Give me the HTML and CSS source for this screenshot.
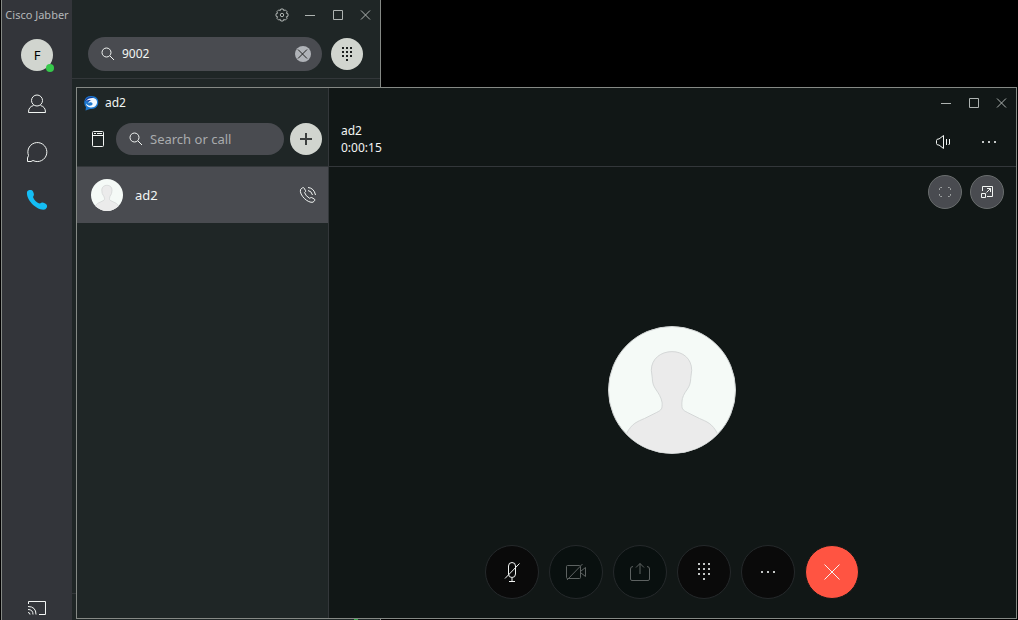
FILE: index.html
```html
<!DOCTYPE html>
<html lang="en">
<head>
<meta charset="utf-8">
<title>Cisco Jabber</title>
<link rel="stylesheet" href="styles.css">
</head>
<body>
<svg class="defs" aria-hidden="true">
  <symbol id="search" viewBox="0 0 14 14"><circle cx="5.5" cy="5.5" r="4.5"/><path d="M9 9l4 4"/></symbol>
  <symbol id="min" viewBox="0 0 12 12"><path d="M1 6.500h10"/></symbol>
  <symbol id="max" viewBox="0 0 12 12"><path d="M1.500 1.500h9v9h-9z"/></symbol>
  <symbol id="close" viewBox="0 0 12 12"><path d="M1 1.500l9 9M10 1.500l-9 9"/></symbol>
  <symbol id="person" viewBox="0 0 128 128">
    <path d="M18 108C23 98 29 96 36 93L48 87C54 84 54 83 54 77C53 71 50 67 48 64C45 60 44 56 44 52L43 44C43 32 53 25 64 25S84 32 84 44L83 52C83 56 82 60 79 64C77 67 74 71 74 77C74 83 74 84 80 87L92 93C99 96 105 98 110 108V130H18z"/>
  </symbol>
  <symbol id="dots" viewBox="0 0 16 4"><path d="M1 1h2v2H1zM7 1h2v2H7zM13 1h2v2h-2z"/></symbol>
</svg>

<main class="desktop">
  <section class="window hub" aria-label="Cisco Jabber">
    <nav class="rail">
      <h1 class="app-name">Cisco Jabber</h1>
      <button class="me" aria-label="My profile">F<span class="presence"></span></button>
      <button class="tab" aria-label="Contacts"><svg class="line" width="20" height="20" viewBox="0 0 20 20"><circle cx="10" cy="6.500" r="5.500"/><path d="M6.500 11.500C3 12.500 1.500 14.500 1.500 18.500h17c0-4-1.500-6-5-7"/></svg></button>
      <button class="tab" aria-label="Chats"><svg class="line" width="22" height="22" viewBox="0 0 22 22"><path d="M1.500 20.500V17L2.500 14.500A9.500 9.500 0 1 1 7 19.500L5 20.500z"/></svg></button>
      <button class="tab" aria-label="Calls"><svg class="handset" width="22" height="22" viewBox="0 0 22 22"><path d="M1 3C2 .5 6 .5 7 2.500C8 4.500 8.500 6 7 8C8 11 11 14 14 14.500C16 13 18 13.500 20 15C22 17 21 19 19 20.500C11 22 0 11 1 3z"/></svg></button>
      <button class="tab cast" aria-label="Share screen"><svg class="line" width="20" height="16" viewBox="0 0 20 16"><path d="M1.500 4V1.500h17v13H12M1 6.500q8 0 8 8M1 9.500q5 0 5 5M1 12.500q2 0 2 2"/></svg></button>
    </nav>
    <div class="hub-body">
      <div class="controls hub-controls">
        <button aria-label="Settings"><svg class="line" width="14" height="14" viewBox="0 0 14 14"><path d="M5.800 1h2.400l.5 1.600 1.600-.7 1.800 1.800-.7 1.600 1.600.5v2.400l-1.600.5.7 1.600-1.800 1.800-1.600-.7-.5 1.600H5.800l-.5-1.600-1.600.7-1.800-1.800.7-1.600L1 8.200V5.800l1.600-.5-.7-1.600 1.800-1.800 1.600.7z"/><circle cx="7" cy="7" r="1.700"/></svg></button>
        <button aria-label="Minimize"><svg class="line" width="12" height="12"><use href="#min"/></svg></button>
        <button aria-label="Maximize"><svg class="line" width="12" height="12"><use href="#max"/></svg></button>
        <button aria-label="Close"><svg class="line" width="12" height="12"><use href="#close"/></svg></button>
      </div>
      <div class="search-row">
        <label class="search"><svg class="line" width="14" height="14"><use href="#search"/></svg><input type="text" value="9002" aria-label="Search or call">
          <button class="clear" aria-label="Clear"><svg class="line" width="12" height="12"><use href="#close"/></svg></button></label>
        <button class="round" aria-label="Keypad"><svg width="10" height="14" viewBox="0 0 10 14"><path d="M0 0h2v2H0zM4 0h2v2H4zM8 0h2v2H8zM0 4h2v2H0zM4 4h2v2H4zM8 4h2v2H8zM0 8h2v2H0zM4 8h2v2H4zM8 8h2v2H8zM4 12h2v2H4z"/></svg></button>
      </div>
      <div class="hub-list"></div>
      <footer class="hub-foot"><span class="line-status"></span></footer>
    </div>
  </section>

  <section class="window call" aria-label="Call with ad2">
    <aside class="list">
      <header class="list-head">
        <div class="title"><svg width="16" height="16" viewBox="0 0 16 16"><path fill="#1d78cf" d="M3 12C0 9 .5 1 8 1c7 0 8 5 7 8.500C14 13 10 14.500 7 14L2.500 15.500z"/><path fill="#143a9a" d="M2 6C3 3 6 1.500 9 2L11 3.500L6 6.500z"/><path fill="#f2f8ff" d="M3 6C5 3 11 1.500 13.500 5C15.500 9 12 13 7.500 12.500C4.500 12 3 10.500 3 8.500C4 10 6 11 8 10.500C10 10 10 8 8.500 7.500C6.500 7 6 8 5.500 8.500C5 7 6.500 5.500 8.500 5.500C6.500 4.500 5 5 3 6z"/></svg><h2>ad2</h2></div>
        <div class="list-search">
          <button class="dock" aria-label="Dock window"><svg class="line" width="14" height="18" viewBox="0 0 14 18"><rect x="1.500" y="1.500" width="11" height="15" rx="1"/><path d="M1.500 5.500h11M3 3.500h2m1 0h5"/></svg></button>
          <label class="search"><svg class="line" width="14" height="14"><use href="#search"/></svg><input type="text" placeholder="Search or call" aria-label="Search or call"></label>
          <button class="round" aria-label="New conversation"><svg class="line plus" width="12" height="12" viewBox="0 0 12 12"><path d="M6 0v12M0 6h12"/></svg></button>
        </div>
      </header>
      <button class="contact">
        <svg class="avatar" width="32" height="32"><use href="#person"/></svg>
        <span>ad2</span>
        <svg class="line ringing" width="18" height="18" viewBox="0 0 18 18"><path d="M1.500 3.500L3.500 1.800Q4.500 1.200 5.200 2.200L6.600 4.800Q6.900 5.700 5.600 6.600Q6.500 10 10.800 12.400Q11.900 11.100 12.800 11.600L15.500 13.200Q16.400 14 15.600 14.700L14 16.200C9 17.500 0 9 1.500 3.500zM9 1.500Q15 2 16.500 9M9 4.500Q12.500 5 13.500 9"/></svg>
      </button>
    </aside>
    <div class="stage">
      <header class="stage-head">
        <div class="who"><h2>ad2</h2><time>0:00:15</time></div>
        <div class="head-actions">
          <div class="controls">
            <button aria-label="Minimize"><svg class="line" width="12" height="12"><use href="#min"/></svg></button>
            <button aria-label="Maximize"><svg class="line" width="12" height="12"><use href="#max"/></svg></button>
            <button aria-label="Close"><svg class="line" width="12" height="12"><use href="#close"/></svg></button>
          </div>
          <div class="audio">
            <button aria-label="Volume"><svg class="line" width="16" height="16" viewBox="0 0 16 16"><path d="M8.500 1.500v13L4 11H2.500L1.500 9.500v-3L2.500 5H4zM11.500 5v6M14.500 5v5l-1 1"/></svg></button>
            <button aria-label="More"><svg class="soft" width="16" height="4"><use href="#dots"/></svg></button>
          </div>
        </div>
      </header>
      <div class="video">
        <div class="view-buttons">
          <button class="view dim" aria-label="Full screen"><svg class="line" width="14" height="12" viewBox="0 0 14 12"><path d="M1.500 4V2.500l1-1H4M10 1.500h1.500l1 1V4M12.500 8v1.500l-1 1H10M4 10.500H2.500l-1-1V8"/></svg></button>
          <button class="view" aria-label="Pop out"><svg class="line" width="14" height="14" viewBox="0 0 14 14"><path d="M2.500 6V1.500h10v10H7M1.500 8.500h4v4h-4zM6.500 7.500l4-4M7 3.500h3.500V7"/></svg></button>
        </div>
        <svg class="avatar large" width="128" height="128"><use href="#person"/></svg>
        <div class="call-bar">
          <button class="act" aria-label="Mute"><svg class="line" width="18" height="24" viewBox="0 0 18 24"><rect x="5.500" y="2.500" width="7" height="15" rx="3.500"/><path d="M16.500 3.500L2 18.500M9 18v3.500M6 21.500h6"/></svg></button>
          <button class="act" disabled aria-label="Start video"><svg class="line" width="22" height="18" viewBox="0 0 22 18"><rect x="1.500" y="2.500" width="14" height="13" rx="1"/><path d="M16 8l4.500-3.500v9L16 10M17.500 1L2 17"/></svg></button>
          <button class="act" disabled aria-label="Share"><svg class="line" width="22" height="20" viewBox="0 0 22 20"><path d="M4 4.500Q1.500 4.500 1.500 7v10q0 1.500 1.500 1.500h16q1.500 0 1.500-1.500V7q0-2.500-2.500-2.500M11 12V1.500M7 5.500l4-4 4 4"/></svg></button>
          <button class="act" aria-label="Keypad"><svg class="soft" width="12" height="18" viewBox="0 0 12 18"><path d="M0 0h2v2H0zM5 0h2v2H5zM10 0h2v2h-2zM0 5h2v2H0zM5 5h2v2H5zM10 5h2v2h-2zM0 10h2v2H0zM5 10h2v2H5zM10 10h2v2h-2zM5 15h2v2H5z"/></svg></button>
          <button class="act" aria-label="More options"><svg class="soft" width="16" height="4"><use href="#dots"/></svg></button>
          <button class="act end" aria-label="End call"><svg class="line" width="18" height="18" viewBox="0 0 18 18"><path d="M1.500 1.500l15 15M16.500 1.500l-15 15"/></svg></button>
        </div>
      </div>
    </div>
  </section>
</main>
</body>
</html>
```
FILE: styles.css
```css
* { box-sizing: border-box; }

body {
  margin: 0;
  background: #000;
  color: #f2f5f3;
  font: 12px/16px "Noto Sans", "Open Sans", sans-serif;
}

button, input { font: inherit; color: inherit; border: 0; padding: 0; background: none; }
button { display: grid; place-items: center; flex: none; }
h1, h2 { margin: 0; font-size: inherit; font-weight: 400; }
svg { display: block; flex: none; fill: currentColor; }
.defs { position: absolute; width: 0; height: 0; }
.line { fill: none; stroke: currentColor; }
.plus { stroke: #3c403f; stroke-width: 2; }
.soft { color: #c4c7c6; }

.desktop { position: relative; height: 100vh; overflow: hidden; }
.window { position: absolute; display: flex; border: 1px solid #858985; }

/* Hub window */
.hub { left: 1px; top: 0; bottom: 0; width: 380px; border-width: 0 1px; background: #1f2626; }
.rail { width: 70px; display: flex; flex-direction: column; align-items: center; background: #33353a; }
.app-name { height: 31px; font-size: 11px; line-height: 30px; color: #b4b7b9; white-space: nowrap; }
.me { position: relative; width: 32px; height: 32px; margin: 8px 0 9px; border-radius: 50%; background: #d1d5cf; color: #000; font-size: 13px; }
.presence { position: absolute; right: -1px; bottom: -1px; width: 8px; height: 8px; border-radius: 50%; background: #36c94b; }
.tab { width: 70px; height: 48px; }
.handset { color: #14bdf4; }
.cast { height: 24px; margin-top: auto; }
.hub-body { flex: 1; display: flex; flex-direction: column; }
.controls { display: flex; color: #aeb3b1; }
.controls button { width: 28px; height: 30px; }
.hub-controls { justify-content: flex-end; }
.search-row { display: flex; align-items: center; gap: 9px; padding: 7px 17px 7px 16px; border-bottom: 1px solid #33373a; }
.search { flex: 1; min-width: 0; height: 34px; display: flex; align-items: center; gap: 7px; padding: 0 11px 0 13px; border-radius: 17px; background: #494b50; }
.search input { flex: 1; min-width: 0; width: 0; outline: 0; }
.search input::placeholder { color: #a9acae; opacity: 1; }
.clear { width: 16px; height: 16px; border-radius: 50%; background: #b0b3b8; color: #222; }
.round { width: 32px; height: 32px; border-radius: 50%; background: #d1d5cf; color: #1b1f1e; }
.hub-list { flex: 1; }
.hub-foot { height: 27px; display: flex; align-items: flex-end; justify-content: flex-end; padding-right: 22px; border-top: 1px solid #33373a; }
.line-status { width: 4px; height: 2px; background: #36a94b; }

/* Call window */
.call { left: 76px; top: 87px; right: 1px; bottom: 1px; background: #111716; }
.list { width: 252px; border-right: 1px solid #33373a; background: #1f2626; }
.list-head { height: 79px; border-bottom: 1px solid #33373a; }
.title { height: 30px; display: flex; align-items: center; gap: 6px; padding-left: 6px; }
.list-search { display: flex; align-items: center; gap: 6px; padding: 5px 6px 0 11px; }
.dock { width: 20px; height: 32px; margin-right: 2px; }
.list-search .search { height: 32px; font-size: 13px; }
.contact { width: 100%; height: 56px; display: flex; align-items: center; gap: 12px; padding: 0 11px 0 14px; background: #494b50; font-size: 13px; }
.ringing { margin-left: auto; }
.avatar { border-radius: 50%; background: #f5faf7; fill: #ebebeb; stroke: #d3d6d6; stroke-width: 3; }
.large { border: 1px solid #d3d6d6; stroke-width: 1; }

.stage { flex: 1; display: flex; flex-direction: column; }
.stage-head { height: 79px; display: flex; justify-content: space-between; border-bottom: 1px solid #33373a; }
.who { padding: 34px 0 0 12px; line-height: 17px; }
.who time { display: block; }
.head-actions { display: flex; flex-direction: column; align-items: flex-end; }
.audio { display: flex; gap: 14px; padding-right: 11px; }
.audio button { width: 32px; height: 48px; }
.video { flex: 1; display: grid; grid-template-rows: 1fr auto 1fr; justify-items: center; padding: 8px 1px 13px 0; }
.view-buttons { justify-self: end; display: flex; gap: 8px; padding-right: 11px; }
.view { width: 34px; height: 34px; border: 1px solid #696d6d; border-radius: 50%; background: #494b50; }
.dim { color: #a0a4a4; }
.call-bar { align-self: end; display: flex; gap: 10px; margin-bottom: 6px; }
.act { width: 54px; height: 54px; border: 1px solid #25292b; border-radius: 50%; background: #0a0a0a; }
.act:disabled { background: #09100f; color: #5d6261; }
.end { border-color: #111716; background: #ff5442; }
```
